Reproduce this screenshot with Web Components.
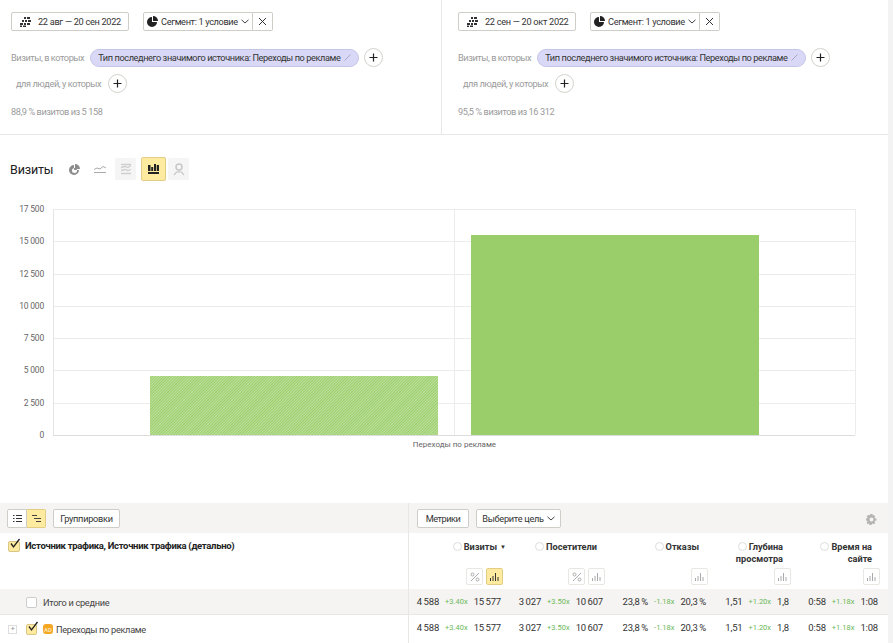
<!DOCTYPE html>
<html lang="ru">
<head>
<meta charset="utf-8">
<title>Отчёт</title>
<style>
html, body { margin: 0; padding: 0; background: #f3f3f3; overflow: hidden; }
body { width: 893px; height: 643px; font: 10px Roboto, "Liberation Sans", sans-serif; color: #222; }
report-page { width: 888px; height: 643px; background: #fff; }
</style>
</head>
<body>
<report-page></report-page>
<script>
const base = `
  * { box-sizing: border-box; }
  svg { flex: none; }
  .btn { display: inline-flex; align-items: center; height: 19px; background: #fff; border: 1px solid #cfcdc8; border-radius: 2px; font-size: 9.2px; color: #333; white-space: nowrap; }
`;

const icons = {
  calendar: '<svg width="11" height="10" viewBox="0 0 11 10"><path d="M4 0h2v2H4zM7 0h3v2H7zM2 3h2v2H2zM5 3h2v2H5zM8 3h3v2H8zM0 6h3v2H0zM4 6h2v2H4zM7 6h3v2H7zM0 8.500h2v1.500H0zM3 8.500h3V10H3z" fill="#333"/></svg>',
  pie: '<svg width="11" height="11" viewBox="0 0 11 11"><path d="M6 0a5 5 0 0 1 5 5H6z" fill="#222"/><path d="M5 1v5h5a5 5 0 1 1-5-5z" fill="#222"/></svg>',
  chevron: '<svg width="8" height="5" viewBox="0 0 8 5"><path d="M.5.8 4 4 7.500.8" fill="none" stroke="#444"/></svg>',
  cross: '<svg width="9" height="9" viewBox="0 0 9 9"><path d="M1 1l7 7M8 1 1 8" stroke="#333" fill="none"/></svg>',
  plus: '<svg width="9" height="9" viewBox="0 0 9 9"><path d="M4.500.5v8M.5 4.500h8" stroke="#222" stroke-width="1.200" fill="none"/></svg>',
  bars: c => `<svg width="9" height="8" viewBox="0 0 9 8"><path d="M.5 5v3M3 3v5M5.500 0v8M8 4v4" stroke="${c}" fill="none"/></svg>`,
  percent: '<svg width="10" height="10" viewBox="0 0 10 10"><path d="M9 1 1 9" stroke="#aaa" fill="none"/><circle cx="2.500" cy="2.500" r="1.500" fill="none" stroke="#aaa"/><circle cx="7.500" cy="7.500" r="1.500" fill="none" stroke="#aaa"/></svg>',
  check: '<svg width="13" height="12" viewBox="0 0 13 12"><path d="M3 5.500 5.500 9 11.500 1" fill="none" stroke="#222" stroke-width="1.300"/></svg>'
};

class DateButton extends HTMLElement {
  connectedCallback() {
    this.attachShadow({ mode: 'open' }).innerHTML = `<style>${base}
      :host { display: block; }
      .btn { width: 118px; padding-left: 8px; gap: 7px; letter-spacing: -.3px; }
    </style><span class="btn">${icons.calendar}<slot></slot></span>`;
  }
}

class SegmentControl extends HTMLElement {
  connectedCallback() {
    this.attachShadow({ mode: 'open' }).innerHTML = `<style>${base}
      :host { display: block; }
      .wrap { display: flex; }
      .main { width: 110px; padding-left: 3px; gap: 3px; border-radius: 2px 0 0 2px; letter-spacing: -.35px; }
      .close { width: 20px; justify-content: center; border-left: 0; border-radius: 0 2px 2px 0; }
    </style><div class="wrap"><span class="btn main">${icons.pie}<slot></slot>${icons.chevron}</span><span class="btn close">${icons.cross}</span></div>`;
  }
}

class PlusButton extends HTMLElement {
  connectedCallback() {
    this.attachShadow({ mode: 'open' }).innerHTML = `<style>
      :host { display: flex; width: 19px; height: 19px; border: 1px solid #d4d2cd; border-radius: 50%; align-items: center; justify-content: center; background: #fff; box-sizing: border-box; flex: none; }
    </style>${icons.plus}`;
  }
}

class FilterPill extends HTMLElement {
  connectedCallback() {
    this.attachShadow({ mode: 'open' }).innerHTML = `<style>
      :host { display: flex; align-items: center; width: 269px; height: 18px; padding: 0 7px 0 7px; justify-content: space-between; background: #d9d9f7; border: 1px solid #c5c5e8; border-radius: 9px; box-sizing: border-box; font-size: 9.2px; color: #333; white-space: nowrap; letter-spacing: -.4px; flex: none; }
    </style><slot></slot><svg width="7" height="7" viewBox="0 0 7 7"><path d="M.5 6.500 6.500.5" stroke="#a9a9c4" fill="none"/></svg>`;
  }
}

class SegmentPanel extends HTMLElement {
  connectedCallback() {
    const d = this.dataset;
    this.attachShadow({ mode: 'open' }).innerHTML = `<style>
      :host { display: block; box-sizing: border-box; height: 134px; padding: 12px 0 0 var(--pad); color: #9b9b9b; font-size: 9.2px; letter-spacing: -.43px; }
      .top { display: flex; gap: 14px; margin-bottom: 17px; color: #333; letter-spacing: 0; }
      .row { display: flex; align-items: center; white-space: nowrap; }
      .one { gap: 6px; height: 19px; margin-bottom: 6px; }
      .one plus-button { margin-left: -1px; }
      .two { gap: 7px; height: 20px; padding-left: 5px; margin-bottom: 13px; }
    </style>
    <div class="top"><date-button>${d.range}</date-button><segment-control>Сегмент: 1 условие</segment-control></div>
    <div class="row one"><span>Визиты, в которых</span><filter-pill>Тип последнего значимого источника: Переходы по рекламе</filter-pill><plus-button></plus-button></div>
    <div class="row two"><span>для людей, у которых</span><plus-button></plus-button></div>
    <div>${d.share}</div>`;
  }
}

class VisitsChart extends HTMLElement {
  connectedCallback() {
    const rows = [['17 500', 209], ['15 000', 241], ['12 500', 274], ['10 000', 306], ['7 500', 338], ['5 000', 370], ['2 500', 403], ['0', 435]];
    const top = 135;
    const lines = rows.map(([t, y]) => `
      <line x1="53" x2="855" y1="${y - top + .5}" y2="${y - top + .5}" stroke="${t === '0' ? '#dcdcdc' : '#ececec'}"/>
      <text x="44" y="${y - top + 3}" text-anchor="end">${t}</text>`).join('');
    const tool = (cls, ml, svg) => `<span class="tool ${cls}" style="margin-left:${ml}px">${svg}</span>`;
    this.attachShadow({ mode: 'open' }).innerHTML = `<style>
      :host { display: block; height: 368px; position: relative; }
      .head { display: flex; align-items: center; height: 24px; position: absolute; left: 10px; top: 22px; }
      h2 { margin: 0 11px 0 0; font: 12.5px Roboto, "Liberation Sans", sans-serif; letter-spacing: -.15px; color: #222; width: 43px; }
      .tools { display: flex; align-items: center; }
      .tool { display: flex; width: 21px; height: 22px; align-items: center; justify-content: center; border-radius: 2px; }
      .grey { background: #f5f5f5; }
      .on { background: #ffeba0; border: 1px solid #e3cc84; width: 23px; }
      svg.plot { display: block; position: absolute; left: 0; top: 0; }
      text { font: 8.5px Roboto, "Liberation Sans", sans-serif; fill: #666; letter-spacing: -.2px; }
    </style>
    <div class="head"><h2>Визиты</h2><div class="tools">
      ${tool('', 0, '<svg width="11" height="11" viewBox="0 0 11 11"><path d="M6 0a5 5 0 0 1 5 5H6z" fill="#8c8c8c"/><path fill-rule="evenodd" d="M5 1v5h5a5 5 0 1 1-5-5zM5.500 4a2.500 2.500 0 1 0 0 5 2.500 2.500 0 0 0 0-5z" fill="#8c8c8c"/></svg>')}
      ${tool('', 4, '<svg width="12" height="7" viewBox="0 0 12 7"><path d="M0 3.500l3-1.500 3 1L9 .5l3 1.500M0 6.500h12" fill="none" stroke="#aaa"/></svg>')}
      ${tool('grey', 5, '<svg width="12" height="12" viewBox="0 0 12 12"><path d="M1 1.500h10M1 4.500l4-1 3 1 3-2M1 7.500l4-1 3 1 3-1M1 10.500h10" fill="none" stroke="#cfcfcf" stroke-width="1.300"/></svg>')}
      ${tool('on', 5, '<svg width="11" height="10" viewBox="0 0 11 10"><path d="M0 1h2.500v6H0zM3.200 3h2v4h-2zM6 0h2v7H6zM8.700 1H11v6H8.700zM0 8h11v2H0z" fill="#222"/></svg>')}
      ${tool('grey', 2, '<svg width="12" height="13" viewBox="0 0 12 13"><circle cx="6" cy="4" r="3" fill="none" stroke="#c8c8c8" stroke-width="1.500"/><path d="M6 7v2M1 12l2.500-3h5L11 12" fill="none" stroke="#c8c8c8" stroke-width="1.200"/></svg>')}
    </div></div>
    <svg class="plot" width="888" height="368" viewBox="0 0 888 368">
      <defs><pattern id="hatch" width="2" height="2" patternUnits="userSpaceOnUse" patternTransform="rotate(45)">
        <rect width="2" height="2" fill="#bfe09f"/><rect width="1" height="2" fill="#9ace6a"/>
      </pattern></defs>
      ${lines}
      <line x1="53.500" x2="53.500" y1="74" y2="300" stroke="#e4e4e4"/>
      <line x1="454.500" x2="454.500" y1="74" y2="300" stroke="#ececec"/>
      <line x1="855.500" x2="855.500" y1="74" y2="300" stroke="#ececec"/>
      <rect x="150" y="241" width="288" height="59" fill="url(#hatch)"/>
      <rect x="471" y="100" width="288" height="200" fill="#9ace6a"/>
      <text x="454.500" y="312" text-anchor="middle" style="font-size:8px;letter-spacing:0">Переходы по рекламе</text>
    </svg>`;
  }
}

class ReportTable extends HTMLElement {
  connectedCallback() {
    const cols = [
      { w: 102, title: 'Визиты', pad: 5, arrow: true, active: true, pct: true, a: '4 588', d: '+3.40x', b: '15 577' },
      { w: 102, title: 'Посетители', pad: 16, pct: true, a: '3 027', d: '+3.50x', b: '10 607' },
      { w: 103, title: 'Отказы', pad: 17, a: '23,8 %', d: '-1.18x', b: '20,3 %' },
      { w: 83, title: 'Глубина просмотра', pad: 16, a: '1,51', d: '+1.20x', b: '1,8' },
      { w: 89, title: 'Время на сайте', pad: 16, a: '0:58', d: '+1.18x', b: '1:08' }
    ];
    const grid = cols.map(c => c.w + 'px').join(' ');
    const head = cols.map(c => `<div class="hcell" style="padding-right:${c.pad}px">
        <div class="htitle"><i class="q"></i>${c.title}${c.arrow ? '<b class="arrow">▼</b>' : ''}</div>
        <div class="hbtns">${c.pct ? `<span class="mini">${icons.percent}</span>` : ''}<span class="mini ${c.active ? 'on' : ''}">${icons.bars(c.active ? '#333' : '#aaa')}</span></div>
      </div>`).join('');
    const nums = cols.map(c => `<div class="num"><span>${c.a}</span><em>${c.d}</em><span>${c.b}</span></div>`).join('');
    this.attachShadow({ mode: 'open' }).innerHTML = `<style>${base}
      :host { display: block; font-size: 9.2px; color: #333; }
      .tr { display: grid; grid-template-columns: 409px 479px; }
      .left { border-right: 1px solid #e8e7e3; }
      .bar { height: 30px; background: #f5f4f2; }
      .bar .left, .bar .right { display: flex; align-items: center; height: 30px; }
      .bar .left { padding-left: 7px; gap: 6px; }
      .bar .right { padding-left: 8px; gap: 7px; position: relative; }
      .bar .btn { letter-spacing: -.27px; justify-content: center; }
      .seg { display: flex; }
      .seg span { display: flex; width: 20px; height: 19px; align-items: center; justify-content: center; background: #fff; border: 1px solid #cfcdc8; border-radius: 2px 0 0 2px; }
      .seg span + span { width: 19px; background: #ffeba0; border: 1px solid #e3cc84; border-left: 0; border-radius: 0 2px 2px 0; }
      .gear { position: absolute; right: 11px; top: 11px; }
      .hrow { height: 56px; }
      .hrow .left { display: flex; padding: 7px 0 0 8px; gap: 5px; font-weight: 700; font-size: 9.5px; color: #222; letter-spacing: -.3px; line-height: 12px; }
      .cols { display: grid; grid-template-columns: ${grid}; }
      .hcell { position: relative; text-align: right; font-weight: 700; font-size: 9.2px; line-height: 11.500px; padding-top: 8px; color: #333; }
      .htitle { height: 27px; }
      .q { display: inline-block; width: 9px; height: 9px; border: 1px solid #ddd; border-radius: 50%; margin-right: 2px; vertical-align: -1px; }
      .arrow { font-size: 6px; margin-left: 3px; vertical-align: 1px; }
      .hbtns { position: absolute; right: 8px; top: 35px; display: flex; gap: 3px; }
      .mini { display: flex; width: 17px; height: 17px; align-items: center; justify-content: center; background: #fff; border: 1px solid #e8e7e3; border-radius: 2px; }
      .mini.on { background: #ffeba0; border-color: #e3cc84; }
      .row { height: 26px; }
      .row.total { background: #f5f4f2; border-bottom: 1px solid #e8e7e3; }
      .row.total .left { padding-top: 2px; }
      .row.last { height: 28px; }
      .row.last .num { padding-bottom: 3px; }
      .row .left { display: flex; align-items: center; padding-left: 26px; color: #444; letter-spacing: -.3px; }
      .num { display: flex; justify-content: flex-end; align-items: center; gap: 6px; padding-right: 10px; height: 100%; font-size: 9.500px; white-space: nowrap; letter-spacing: -.2px; word-spacing: -.5px; }
      .num em { font-style: normal; font-size: 7.500px; color: #6cb85a; letter-spacing: 0; }
      .box { display: block; width: 11px; height: 11px; background: #fff; border: 1px solid #ccc; border-radius: 2px; margin-right: 6px; position: relative; flex: none; }
      .box.y { background: #ffeba0; border-color: #d9c584; }
      .box svg { position: absolute; left: -1px; top: -4px; }
      .exp { position: absolute; left: 8px; width: 9px; height: 9px; border: 1px solid #ddd; display: flex; align-items: center; justify-content: center; color: #999; font-size: 8px; line-height: 1; background: #fff; }
      .ad { display: inline-flex; width: 10px; height: 10px; background: #f5a623; border-radius: 3px; color: #ffe2ae; font: 700 6px Roboto, sans-serif; align-items: center; justify-content: center; margin-right: 3px; letter-spacing: 0; }
      .rel { position: relative; }
    </style>
    <div class="tr bar">
      <div class="left"><div class="seg"><span><svg width="9" height="7" viewBox="0 0 9 7"><path d="M0 .500h1.500M3 .500h6M0 3.500h1.500M3 3.500h6M0 6.500h1.500M3 6.500h6" stroke="#333"/></svg></span><span><svg width="9" height="7" viewBox="0 0 9 7"><path d="M0 .500h5M2 3.500h7M4 6.500h5" stroke="#444"/></svg></span></div><span class="btn" style="width:67px;margin-left:1px">Группировки</span></div>
      <div class="right"><span class="btn" style="width:52px;letter-spacing:-.5px">Метрики</span><span class="btn" style="width:85px;gap:3px">Выберите цель ${icons.chevron}</span>
      <svg class="gear" width="11" height="11" viewBox="0 0 11 11"><path fill-rule="evenodd" d="M4.500 0h2l.3 1.500 1-.5L9.300 2.200l-.8 1.200.5 1 1.500.2v1.800l-1.500.3-.5 1 .8 1.200-1.500 1.300-1-.7-1 .4-.3 1.500h-2l-.3-1.500-1-.4-1 .7L.7 8.900l.8-1.200-.5-1-1.500-.3V4.600L1 4.400l.5-1-.8-1.200L2.200 1l1 .5zM5.500 3.500a2 2 0 1 0 0 4 2 2 0 0 0 0-4z" fill="#b4b4b4"/></svg></div>
    </div>
    <div class="tr hrow">
      <div class="left"><span class="box y" style="margin:1px 0 0 0;width:12px">${icons.check}</span><span>Источник трафика, Источник трафика (детально)</span></div>
      <div class="cols">${head}</div>
    </div>
    <div class="tr row total">
      <div class="left"><span class="box"></span>Итого и средние</div>
      <div class="cols">${nums}</div>
    </div>
    <div class="tr row last">
      <div class="left rel"><span class="exp">+</span><span class="box y">${icons.check}</span><span class="ad">AD</span>Переходы по рекламе</div>
      <div class="cols">${nums}</div>
    </div>`;
  }
}

class ReportPage extends HTMLElement {
  connectedCallback() {
    this.attachShadow({ mode: 'open' }).innerHTML = `<style>
      :host { display: block; }
      .panels { display: grid; grid-template-columns: 441px 447px; border-bottom: 1px solid #e8e8e8; }
      .panels segment-panel:first-child { --pad: 11px; }
      .panels segment-panel:last-child { --pad: 16px; border-left: 1px solid #e8e8e8; }
    </style>
    <div class="panels">
      <segment-panel data-range="22 авг — 20 сен 2022" data-share="88,9 % визитов из 5 158"></segment-panel>
      <segment-panel data-range="22 сен — 20 окт 2022" data-share="95,5 % визитов из 16 312"></segment-panel>
    </div>
    <visits-chart></visits-chart>
    <report-table></report-table>`;
  }
}

customElements.define('date-button', DateButton);
customElements.define('segment-control', SegmentControl);
customElements.define('plus-button', PlusButton);
customElements.define('filter-pill', FilterPill);
customElements.define('segment-panel', SegmentPanel);
customElements.define('visits-chart', VisitsChart);
customElements.define('report-table', ReportTable);
customElements.define('report-page', ReportPage);
</script>
</body>
</html>
